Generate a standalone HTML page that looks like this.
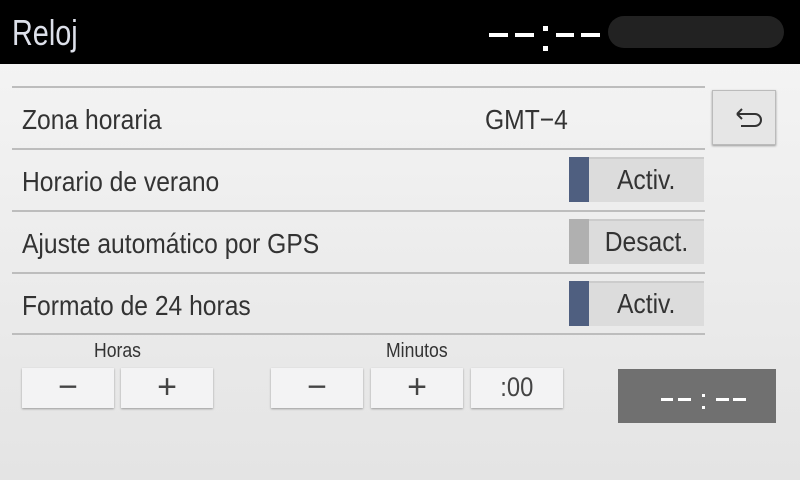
<!DOCTYPE html>
<html><head><meta charset="utf-8"><style>
*{margin:0;padding:0;box-sizing:border-box}
body{width:800px;height:480px;overflow:hidden;background:linear-gradient(#f6f6f6,#e4e4e4);font-family:"Liberation Sans",sans-serif;color:#333;position:relative}
.n{display:inline-block;transform:scaleX(0.88);transform-origin:left center;white-space:nowrap}
.hdr{position:absolute;left:0;top:0;width:800px;height:64px;background:#000}
.t{position:absolute;left:12px;top:12px;font-size:36px;color:#dde0ea}
.pill{position:absolute;left:608px;top:16px;width:176px;height:32px;border-radius:16px;background:#222}
.ln{position:absolute;left:12px;width:693px;height:2px;background:#bdbdbd}
.lb{position:absolute;left:22px;font-size:28px;color:#333}
.tg{position:absolute;left:569px;width:135px;height:45px;background:#dcdcdc;border-top:2px solid #ccc;font-size:28px;padding-left:20px;line-height:42px;text-align:center}
.tg .n{transform-origin:center center}
.tg i{position:absolute;left:0;top:-2px;width:20px;height:45px;background:#4f5f80}
.tg.off i{background:#b0b0b0}
.back{position:absolute;left:712px;top:90px;width:64px;height:55px;background:#e6e6e6;border:1px solid #bbb;box-shadow:0 1px 2px #999}
.b{position:absolute;top:368px;width:92px;height:40px;background:#f3f3f4;box-shadow:0 1px 2px #999;text-align:center;font-size:34px;font-weight:300;line-height:38px;color:#444}
.sm{position:absolute;top:340px;font-size:20px;color:#333}
.dk{position:absolute;left:618px;top:369px;width:158px;height:54px;background:#707070}
</style></head><body>
<div class="hdr"><div class="t"><span class="n" style="transform:scaleX(0.8)">Reloj</span></div>
<svg style="position:absolute;left:0;top:0" width="610" height="64"><g fill="#fff"><rect x="489" y="33" width="19" height="4"/><rect x="515" y="33" width="19" height="4"/><rect x="543" y="26" width="5" height="5"/><rect x="543" y="46" width="5" height="5"/><rect x="556" y="33" width="18" height="4"/><rect x="581" y="33" width="19" height="4"/></g></svg>
<div class="pill"></div></div>
<div class="ln" style="top:86px"></div>
<div class="ln" style="top:148px"></div>
<div class="ln" style="top:210px"></div>
<div class="ln" style="top:272px"></div>
<div class="ln" style="top:333px"></div>
<div class="lb" style="top:104px"><span class="n">Zona horaria</span></div>
<div class="lb" style="top:104px;left:485px"><span class="n">GMT−4</span></div>
<div class="lb" style="top:166px"><span class="n">Horario de verano</span></div>
<div class="lb" style="top:228px"><span class="n">Ajuste automático por GPS</span></div>
<div class="lb" style="top:290px"><span class="n">Formato de 24 horas</span></div>
<div class="tg" style="top:157px"><i></i><span class="n">Activ.</span></div>
<div class="tg off" style="top:219px"><i></i><span class="n">Desact.</span></div>
<div class="tg" style="top:281px"><i></i><span class="n">Activ.</span></div>
<div class="back"><svg width="64" height="55" viewBox="0 0 64 55"><path d="M24 23H42a6 6 0 0 1 0 12H28M24 23l5-5M24 23l5 5" fill="none" stroke="#333" stroke-width="2"/></svg></div>
<div class="sm" style="left:94px"><span class="n">Horas</span></div>
<div class="sm" style="left:386px"><span class="n">Minutos</span></div>
<div class="b" style="left:22px">−</div>
<div class="b" style="left:121px">+</div>
<div class="b" style="left:271px">−</div>
<div class="b" style="left:371px">+</div>
<div class="b" style="left:471px;font-size:27px"><span class="n" style="transform-origin:center">:00</span></div>
<div class="dk"><svg width="158" height="54"><g fill="#fff"><rect x="43" y="29" width="12" height="3"/><rect x="60" y="29" width="13" height="3"/><rect x="84" y="25" width="3" height="3"/><rect x="84" y="37" width="3" height="3"/><rect x="98" y="29" width="13" height="3"/><rect x="115" y="29" width="13" height="3"/></g></svg></div>
</body></html>
